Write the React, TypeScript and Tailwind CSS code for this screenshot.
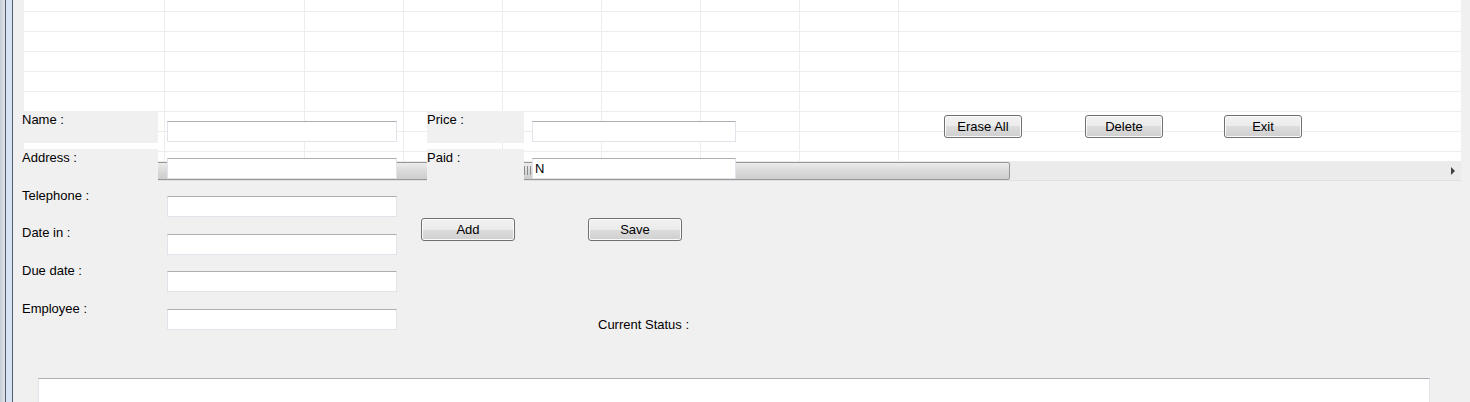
const GRID_CELLS = [
  "w-[141px] border-r",
  "w-[140px] border-r",
  "w-[99px] border-r",
  "w-[99px] border-r",
  "w-[99px] border-r",
  "w-[99px] border-r",
  "w-[99px] border-r",
  "w-[99px] border-r",
  "flex-1",
];

const LEFT_FIELDS = [
  { label: "Name :", boxed: true, rowH: "h-[38px]", inputTop: "mt-[10px]" },
  { label: "Address :", boxed: true, rowH: "h-[38px]", inputTop: "mt-[9px]" },
  { label: "Telephone :", boxed: false, rowH: "h-[37px]", inputTop: "mt-[9px]" },
  { label: "Date in :", boxed: false, rowH: "h-[38px]", inputTop: "mt-[10px]" },
  { label: "Due date :", boxed: false, rowH: "h-[38px]", inputTop: "mt-[9px]" },
  { label: "Employee :", boxed: false, rowH: "h-[38px]", inputTop: "mt-[9px]" },
];

function WinButton({ children, className = "" }: { children: React.ReactNode; className?: string }) {
  return (
    <button
      type="button"
      className={`flex h-[23px] items-center justify-center rounded-[3px] border border-[#707070] bg-[linear-gradient(to_bottom,#f2f2f2_0%,#ebebeb_50%,#dddddd_50%,#cfcfcf_100%)] text-[13px] leading-[15px] text-black shadow-[inset_0_0_0_1px_#fbfbfb] ${className}`}
    >
      {children}
    </button>
  );
}

function TextBox({ value = "", className = "" }: { value?: string; className?: string }) {
  return (
    <div
      className={`h-[21px] border border-[#e2e3ea] border-t-[#abadb3] bg-white pl-[2px] text-[13px] leading-[19px] text-black ${className}`}
    >
      {value}
    </div>
  );
}

function WindowEdge() {
  return (
    <div className="flex h-full w-[13px] shrink-0">
      <div className="w-[5px] bg-[linear-gradient(to_right,#c6ccd6,#dfe4ec)]" />
      <div className="w-px bg-[#525c68]" />
      <div className="w-[6px] bg-[#d6e3f5]" />
      <div className="w-px bg-[#525c68]" />
    </div>
  );
}

function DataGrid() {
  return (
    <div className="ml-[11px] w-[1437px] shrink-0">
      {/* rows, scrolled a little */}
      <div className="h-[161px] overflow-hidden bg-white">
        <div className="-mt-[8px] flex flex-col">
          {Array.from({ length: 9 }).map((_, r) => (
            <div key={r} className="flex h-[20px] shrink-0 border-b border-[#ededed]">
              {GRID_CELLS.map((c, i) => (
                <div key={i} className={`h-full border-[#ededed] ${c}`} />
              ))}
            </div>
          ))}
        </div>
      </div>

      {/* horizontal scrollbar */}
      <div className="flex h-[20px] items-center border-b border-[#e0e0e0] bg-[#ebebeb]">
        <div className="flex h-full w-[17px] items-center justify-center">
          <div className="h-0 w-0 border-y-[4px] border-r-[4px] border-y-transparent border-r-[#606060]" />
        </div>
        <div className="flex h-[18px] w-[969px] items-center justify-center rounded-[2px] border border-[#979797] bg-[linear-gradient(to_bottom,#ececec,#dadada_50%,#cdcdcd)]">
          <div className="flex h-[9px] gap-[2px]">
            <div className="w-px bg-[#8a8a8a]" />
            <div className="w-px bg-[#8a8a8a]" />
            <div className="w-px bg-[#8a8a8a]" />
            <div className="w-px bg-[#8a8a8a]" />
          </div>
        </div>
        <div className="flex-1" />
        <div className="flex h-full w-[17px] items-center justify-center">
          <div className="h-0 w-0 border-y-[4px] border-l-[4px] border-y-transparent border-l-[#404040]" />
        </div>
      </div>
    </div>
  );
}

export default function App() {
  return (
    <div className="flex h-[402px] w-[1470px] overflow-hidden bg-[#f0f0f0] font-['Liberation_Sans',Arial,sans-serif] text-black">
      <WindowEdge />

      <div className="flex flex-1 flex-col">
        <DataGrid />

        {/* form controls laid over the grid */}
        <div className="relative z-10 -mt-[70px] flex h-[267px] shrink-0 items-start pl-[9px]">
          {/* left column */}
          <div className="flex w-[375px] flex-col">
            {LEFT_FIELDS.map((f) => (
              <div key={f.label} className={`flex shrink-0 items-start ${f.rowH}`}>
                <div
                  className={`h-[32px] w-[136px] pt-px text-[13px] leading-[15px] ${f.boxed ? "bg-[#f0f0f0]" : ""}`}
                >
                  {f.label}
                </div>
                <TextBox className={`ml-[9px] w-[230px] ${f.inputTop}`} />
              </div>
            ))}
          </div>

          {/* middle column */}
          <div className="ml-[30px] flex w-[309px] flex-col">
            <div className="flex h-[38px] items-start">
              <div className="h-[32px] w-[97px] bg-[#f0f0f0] pt-px text-[13px] leading-[15px]">Price :</div>
              <TextBox className="ml-[8px] mt-[10px] w-[204px]" />
            </div>
            <div className="flex h-[32px] items-start">
              <div className="h-[32px] w-[97px] bg-[#f0f0f0] pt-px text-[13px] leading-[15px]">Paid :</div>
              <TextBox value="N" className="ml-[8px] mt-[9px] w-[204px]" />
            </div>
            <div className="-ml-[6px] mt-[37px] flex">
              <WinButton className="w-[94px]">Add</WinButton>
              <WinButton className="ml-[73px] w-[94px]">Save</WinButton>
            </div>
            <div className="ml-[171px] mt-[76px] text-[13px] leading-[15px]">Current Status :</div>
          </div>

          {/* right buttons */}
          <div className="ml-[208px] mt-[4px] flex">
            <WinButton className="w-[78px]">Erase All</WinButton>
            <WinButton className="ml-[63px] w-[78px]">Delete</WinButton>
            <WinButton className="ml-[61px] w-[78px]">Exit</WinButton>
          </div>
        </div>

        {/* status box */}
        <div className="ml-[25px] h-[40px] w-[1392px] shrink-0 border border-[#e2e3ea] border-t-[#abadb3] bg-white" />
      </div>
    </div>
  );
}
